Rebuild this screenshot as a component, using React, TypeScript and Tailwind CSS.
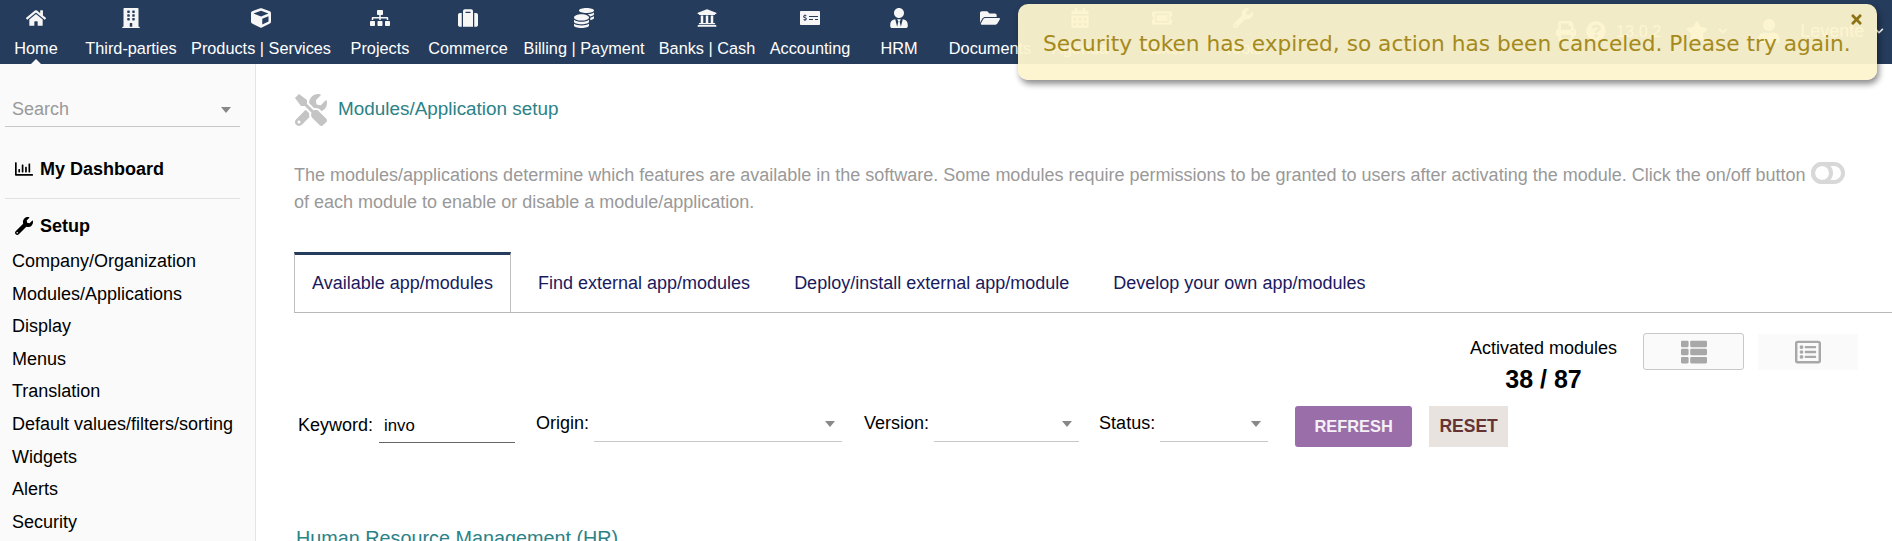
import { ReactNode } from "react";
import {
  FaHome,
  FaBuilding,
  FaCube,
  FaSitemap,
  FaSuitcase,
  FaCoins,
  FaUniversity,
  FaMoneyCheckAlt,
  FaUserTie,
  FaFolderOpen,
  FaCalendarAlt,
  FaTicketAlt,
  FaWrench,
  FaTools,
  FaRegChartBar,
  FaThList,
  FaRegListAlt,
  FaTimes,
  FaPrint,
  FaQuestionCircle,
  FaStar,
  FaUser,
  FaChevronDown,
} from "react-icons/fa";

const menu: { label: string; icon: ReactNode; w: string }[] = [
  { label: "Home", icon: <FaHome />, w: "w-[72px]" },
  { label: "Third-parties", icon: <FaBuilding />, w: "w-[118px]" },
  { label: "Products | Services", icon: <FaCube />, w: "w-[142px]" },
  { label: "Projects", icon: <FaSitemap />, w: "w-[96px]" },
  { label: "Commerce", icon: <FaSuitcase />, w: "w-[80px]" },
  { label: "Billing | Payment", icon: <FaCoins />, w: "w-[152px]" },
  { label: "Banks | Cash", icon: <FaUniversity />, w: "w-[94px]" },
  { label: "Accounting", icon: <FaMoneyCheckAlt />, w: "w-[112px]" },
  { label: "HRM", icon: <FaUserTie />, w: "w-[66px]" },
  { label: "Documents", icon: <FaFolderOpen />, w: "w-[116px]" },
  { label: "Agenda", icon: <FaCalendarAlt />, w: "w-[64px]" },
  { label: "Ticket", icon: <FaTicketAlt />, w: "w-[100px]" },
  { label: "Tools", icon: <FaWrench />, w: "w-[62px]" },
];

const setupLinks = [
  "Company/Organization",
  "Modules/Applications",
  "Display",
  "Menus",
  "Translation",
  "Default values/filters/sorting",
  "Widgets",
  "Alerts",
  "Security",
];

const tabs = [
  "Find external app/modules",
  "Deploy/install external app/module",
  "Develop your own app/modules",
];

function Caret() {
  return (
    <span className="h-0 w-0 border-x-[5px] border-t-[6px] border-x-transparent border-t-[#888]" />
  );
}

function SelectField({ label, width }: { label: string; width: string }) {
  return (
    <div className="flex items-start">
      <span className="mr-[5px] pt-[7px] leading-[20px]">{label}</span>
      <div className={`flex h-[36px] items-center justify-end border-b border-[#c8c8c8] pr-[7px] ${width}`}>
        <Caret />
      </div>
    </div>
  );
}

export default function App() {
  return (
    <div className="relative h-[541px] w-[1892px] overflow-hidden bg-white font-['Liberation_Sans',Arial,sans-serif] text-[18px] text-black">
      <header className="flex h-[64px] items-start bg-[#263c5c] text-white">
        {menu.map((item) => (
          <div key={item.label} className={`relative flex shrink-0 flex-col items-center whitespace-nowrap ${item.w}`}>
            <span className="flex h-[36px] items-center text-[20px] text-[#f6f6f6]">{item.icon}</span>
            <span className="mt-[2px] text-[16.3px] leading-[20px]">{item.label}</span>
            {item.label === "Home" && (
              <span className="absolute top-[59px] h-0 w-0 border-x-[5px] border-b-[5px] border-x-transparent border-b-[#fafafa]" />
            )}
          </div>
        ))}
        <div className="ml-[282px] flex h-[62px] items-center text-[20px] text-white">
          <FaPrint />
          <FaQuestionCircle className="ml-[10px]" />
          <span className="ml-[10px] text-[16.3px]">13.0.2</span>
          <FaStar className="ml-[25px] text-[22px]" />
          <FaChevronDown className="ml-[10px] text-[10px]" />
          <FaUser className="ml-[29px] text-[24px]" />
          <span className="ml-[19px] text-[18px]">Levente</span>
          <FaChevronDown className="ml-[10px] text-[10px]" />
        </div>
      </header>

      <div className="flex h-[477px]">
        <aside className="w-[256px] shrink-0 border-r border-[#e4e4e4] bg-[#fafafa] pl-[5px] pr-[15px]">
          <div className="mt-[29px] flex h-[34px] items-center justify-between border-b border-[#c8c8c8] pl-[7px] pr-[9px] text-[#999]">
            <span>Search</span>
            <Caret />
          </div>
          <div className="mt-[32px] flex items-center gap-[7px] pl-[10px] font-bold leading-[20px]">
            <FaRegChartBar className="text-[18px]" />
            <span>My Dashboard</span>
          </div>
          <div className="mt-[19px] border-t border-[#e0e0e0]" />
          <div className="mt-[17px] flex items-center gap-[7px] pl-[10px] font-bold leading-[20px]">
            <FaWrench className="text-[18px]" />
            <span>Setup</span>
          </div>
          <ul className="mt-[9px] pl-[7px]">
            {setupLinks.map((link) => (
              <li key={link} className="h-[32.6px] whitespace-nowrap leading-[32.6px]">
                {link}
              </li>
            ))}
          </ul>
        </aside>

        <main className="min-w-0 flex-1 pl-[38px]">
          <div className="mt-[29px] flex h-[33px] items-center pl-[1px]">
            <FaTools className="text-[32px] text-[#c4c4c4]" />
            <span className="ml-[11px] text-[18.9px] text-[#2b8287]">Modules/Application setup</span>
          </div>
          <p className="mt-[36px] w-[1562px] leading-[26.5px] text-[#999]">
            The modules/applications determine which features are available in the software. Some modules require permissions to be granted to users after activating the module. Click the on/off button{" "}
            <span className="relative top-[-3px] inline-flex h-[22px] w-[34px] align-middle">
              <span className="h-[22px] w-[34px] rounded-full border-[4px] border-[#d8d8d8]" />
              <span className="absolute left-0 top-0 h-[22px] w-[22px] rounded-full border-[4px] border-[#d8d8d8]" />
            </span>{" "}
            of each module to enable or disable a module/application.
          </p>

          <div className="mt-[37px] flex h-[61px] items-stretch border-b border-[#b8b8b8] text-[#1a1a5e]">
            <div className="mr-[5px] flex w-[217px] items-center justify-center border-x border-t-[3px] border-x-[#c0c0c0] border-t-[#263c5c] bg-white">
              Available app/modules
            </div>
            {tabs.map((tab) => (
              <div key={tab} className="flex items-center whitespace-nowrap px-[22px] pt-[2px]">
                {tab}
              </div>
            ))}
          </div>

          <div className="mt-[20px] flex h-[64px] items-start justify-end gap-[26px] pr-[34px]">
            <div className="flex flex-col items-center pt-[2px]">
              <span className="leading-[26px]">Activated modules</span>
              <span className="text-[25px] font-bold leading-[36px]">38 / 87</span>
            </div>
            <div className="flex items-center gap-[14px]">
              <div className="flex h-[37px] w-[101px] items-center justify-center rounded-[3px] border border-[#c8c8c8] bg-[#fafafa] text-[26px] text-[#a8a8a8]">
                <FaThList />
              </div>
              <div className="flex h-[36px] w-[100px] items-center justify-center bg-[#fafafa] text-[26px] text-[#a8a8a8]">
                <FaRegListAlt />
              </div>
            </div>
          </div>

          <div className="mt-[9px] flex items-start pl-[4px]">
            <div className="flex items-start">
              <span className="mr-[6px] pt-[9px] leading-[20px]">Keyword:</span>
              <div className="h-[37px] w-[136px] border-b border-[#666] pl-[5px] pt-[10px] text-[16.8px] leading-[20px]">invo</div>
            </div>
            <div className="ml-[21px]"><SelectField label="Origin:" width="w-[248px]" /></div>
            <div className="ml-[22px]"><SelectField label="Version:" width="w-[145px]" /></div>
            <div className="ml-[20px]"><SelectField label="Status:" width="w-[108px]" /></div>
            <button className="ml-[27px] h-[41px] w-[117px] rounded-[3px] bg-[#9a6ea8] text-[16.4px] font-bold text-[#f4f0f6]">REFRESH</button>
            <button className="ml-[17px] h-[41px] w-[79px] bg-[#e8e3df] text-[17.5px] font-bold text-[#633]">RESET</button>
          </div>

          <div className="ml-[2px] mt-[79px] text-[19.8px] leading-[24px] text-[#2b8287]">Human Resource Management (HR)</div>
        </main>
      </div>

      <div className="absolute left-[1018px] top-[4px] h-[76px] w-[859px] rounded-[10px] bg-[#fdf4ce]/95 pl-[25px] pt-[27px] font-['DejaVu_Sans',sans-serif] text-[21.7px] leading-[26px] text-[#a58a1b] shadow-[2px_4px_6px_rgba(0,0,0,0.45)]">
        Security token has expired, so action has been canceled. Please try again.
        <FaTimes className="absolute right-[13px] top-[8px] text-[15px] text-[#8c7415]" />
      </div>
    </div>
  );
}
